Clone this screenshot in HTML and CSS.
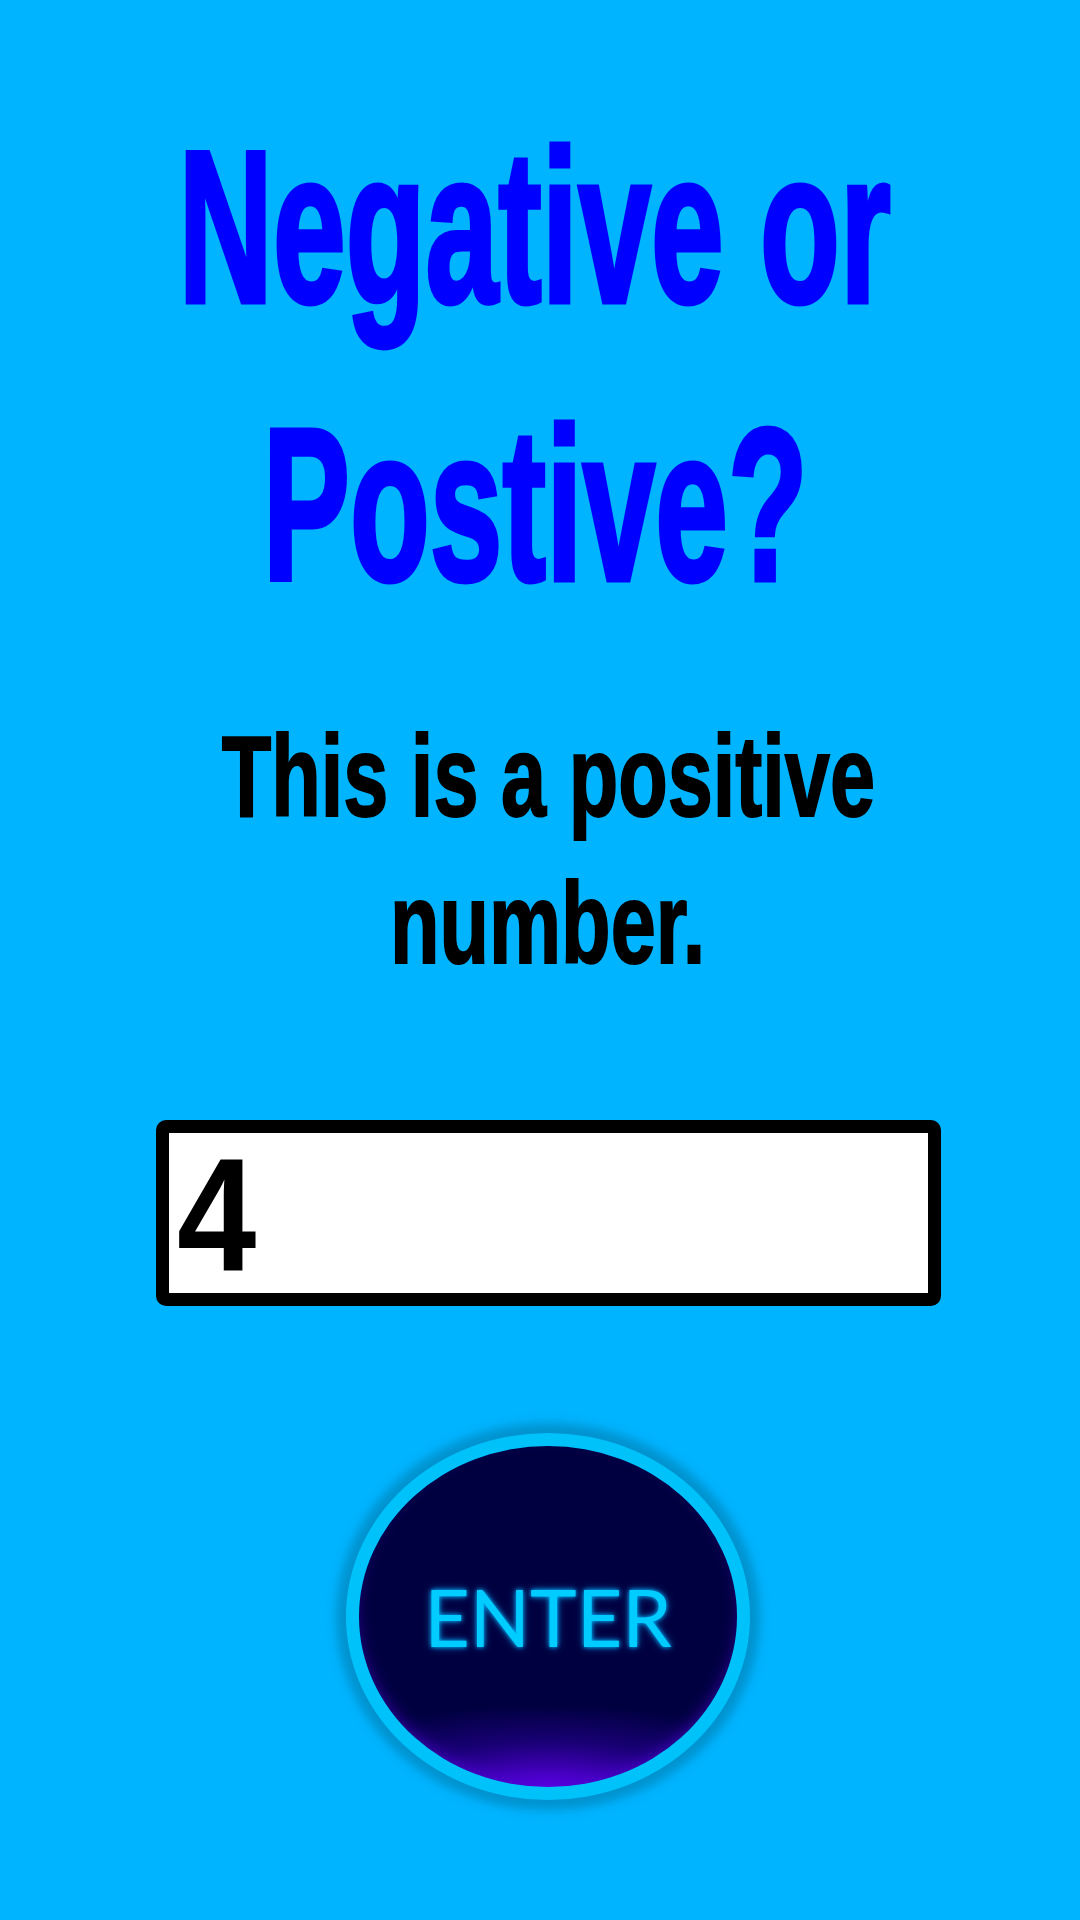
FILE: index.html
```html
<!DOCTYPE html>
<html>
<head>
<meta charset="utf-8">
<link rel="stylesheet" href="styles.css">
</head>
<body>
<main class="screen">
  <h1 class="title">
    <span class="title-line">Negative or</span>
    <span class="title-line">Postive?</span>
  </h1>
  <p class="result">
    <span class="result-line">This is a positive</span>
    <span class="result-line">number.</span>
  </p>
  <div class="number-input"><span class="number-value">4</span></div>
  <button class="enter-btn"><span class="enter-label">ENTER</span></button>
</main>
</body>
</html>
```

FILE: styles.css
```css
html, body {
  margin: 0;
  padding: 0;
  background: #00b4ff;
}
.screen {
  width: 1080px;
  height: 1920px;
  box-sizing: border-box;
  padding-left: 16px;
  display: flex;
  flex-direction: column;
  align-items: center;
  font-family: "Liberation Sans", Arial, sans-serif;
  overflow: hidden;
}
.title {
  margin: 88px 0 0 0;
  padding-right: 26px;
  width: 1064px;
  box-sizing: border-box;
  display: flex;
  flex-direction: column;
  align-items: center;
  font-size: 218px;
  line-height: 278px;
  font-weight: 700;
  color: #0000ff;
  -webkit-text-stroke: 5px #0000ff;
}
.title-line {
  flex: none;
  white-space: nowrap;
  transform: scaleX(0.6);
}
.result {
  margin: 59px 0 0 0;
  width: 1064px;
  display: flex;
  flex-direction: column;
  align-items: center;
  font-size: 115px;
  line-height: 147px;
  font-weight: 700;
  color: #000;
  -webkit-text-stroke: 2px #000;
}
.result-line {
  flex: none;
  white-space: nowrap;
  transform: scaleX(0.705);
}
.number-input {
  margin-top: 123px;
  width: 785px;
  height: 186px;
  box-sizing: border-box;
  border: 13px solid #000;
  border-radius: 10px;
  background: #fff;
  padding: 4px 0 0 8px;
  font-size: 162px;
  line-height: 156px;
  font-weight: 700;
  color: #000;
}
.number-value {
  display: inline-block;
  transform: scaleX(0.88);
  transform-origin: left center;
}
.enter-btn {
  margin-top: 127px;
  width: 404px;
  height: 367px;
  box-sizing: border-box;
  border: 13px solid #00c2fa;
  border-radius: 50%;
  background:
    radial-gradient(ellipse 72% 24% at 50% 100%, rgba(95, 0, 235, 0.95) 0%, rgba(50, 0, 170, 0.5) 55%, rgba(0, 0, 64, 0) 100%),
    #000040;
  box-shadow: 0 0 10px 10px rgba(0, 125, 175, 0.6), inset 0 -8px 18px -6px rgba(80, 0, 220, 0.8);
  display: flex;
  align-items: center;
  justify-content: center;
  padding: 0;
  cursor: pointer;
}
.enter-label {
  font-family: Lato, "Open Sans", sans-serif;
  font-weight: 400;
  font-size: 79px;
  line-height: 1;
  color: #00ccff;
  letter-spacing: 0px;
  text-shadow: 0 0 4px #00b8ff, 0 0 8px rgba(0, 170, 255, 0.6);
}
```
